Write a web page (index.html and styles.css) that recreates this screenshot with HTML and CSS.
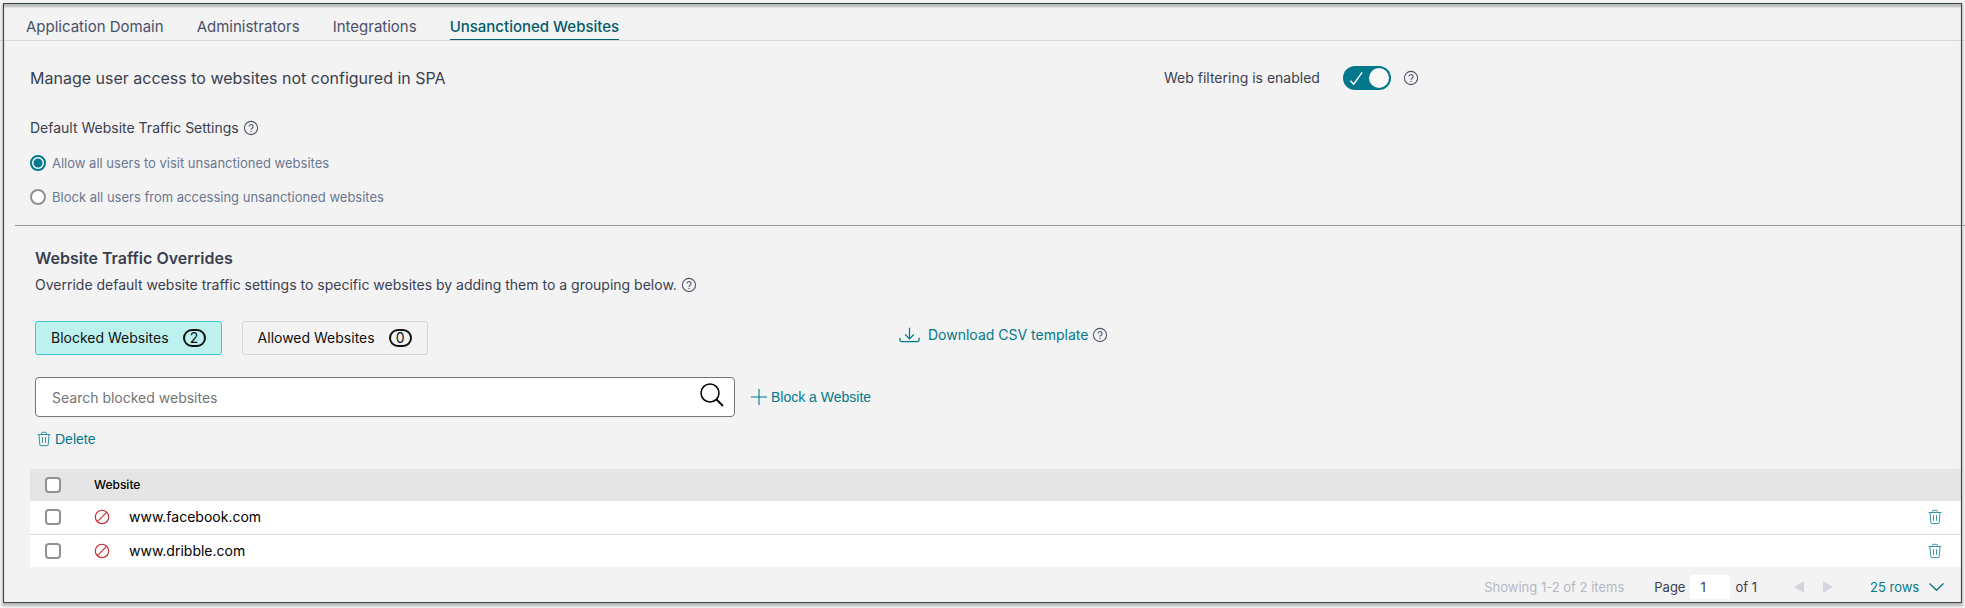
FILE: index.html
```html
<!DOCTYPE html>
<html lang="en">
<head>
  <meta charset="UTF-8" />
  <title>Unsanctioned Websites</title>
  <meta name="viewport" content="width=device-width, initial-scale=1" />
  <link rel="stylesheet" href="styles.css">
</head>
<body>
  <!-- shared icons -->
  <svg class="sprite" aria-hidden="true">
    <symbol id="help" viewBox="0 0 16 16">
      <circle cx="8" cy="8" r="6.6" fill="none" stroke="currentColor" stroke-width="1.1"/>
      <path d="M6 6.6a2 2 0 1 1 3.1 1.6C8.300 8.700 8 9 8 9.800" fill="none" stroke="currentColor" stroke-width="1.100"/>
      <circle cx="8" cy="11.500" r=".7" fill="currentColor"/>
    </symbol>
    <symbol id="trash" viewBox="0 0 14 16">
      <path d="M.7 3.500h12.600M4.600 3.300V2.200q0-.9.900-.9h3q.9 0 .9.900v1.100M2 3.600l.8 10.200q.1.800.9.800h6.600q.8 0 .9-.8L12 3.600M5.500 6.200v5.600M8.500 6.200v5.600" fill="none" stroke="currentColor" stroke-width=".8"/>
    </symbol>
    <symbol id="blocked" viewBox="0 0 16 16">
      <circle cx="8" cy="8" r="6.700" fill="none" stroke="currentColor" stroke-width="1.100"/>
      <path d="M12.700 3.300 3.300 12.700" stroke="currentColor" stroke-width="1.100"/>
    </symbol>
  </svg>

  <nav class="tabs">
    <a href="#domain">Application Domain</a>
    <a href="#administrators">Administrators</a>
    <a href="#integrations">Integrations</a>
    <a href="#unsanctioned" class="active" aria-current="page">Unsanctioned Websites</a>
  </nav>

  <main>
    <section class="settings">
      <div class="columns">
        <h1>Manage user access to websites not configured in SPA</h1>
        <div class="filtering">
          <label for="filtering">Web filtering is enabled</label>
          <span class="switch">
            <input type="checkbox" role="switch" id="filtering" checked>
            <svg viewBox="0 0 16 16" aria-hidden="true"><path d="M1.500 10.500 5 14 14 1.500" fill="none" stroke="#fff" stroke-width="1.500"/></svg>
          </span>
          <svg class="help"><use href="#help"/></svg>
        </div>
      </div>
      <fieldset>
        <legend>Default Website Traffic Settings <svg class="help"><use href="#help"/></svg></legend>
        <label class="option"><input type="radio" name="traffic" checked>Allow all users to visit unsanctioned websites</label>
        <label class="option"><input type="radio" name="traffic">Block all users from accessing unsanctioned websites</label>
      </fieldset>
    </section>

    <section class="overrides">
      <h2>Website Traffic Overrides</h2>
      <p>Override default website traffic settings to specific websites by adding them to a grouping below. <svg class="help"><use href="#help"/></svg></p>
      <div class="groups">
        <div class="group-buttons">
          <button class="group selected">Blocked Websites <span class="count">2</span></button>
          <button class="group">Allowed Websites <span class="count">0</span></button>
        </div>
        <div class="download">
          <a href="#template">
            <svg class="download-icon" viewBox="0 0 22 16"><path d="M11 .5v11M6.500 7.500 11 12l4.500-4.500M1 11v2q0 2 2 2h16q2 0 2-2v-2" fill="none" stroke="currentColor" stroke-width="1.300"/></svg>
            Download CSV template
          </a>
          <svg class="help"><use href="#help"/></svg>
        </div>
      </div>
      <div class="search-row">
        <div class="search">
          <input type="search" placeholder="Search blocked websites" aria-label="Search blocked websites">
          <svg viewBox="0 0 24 24" aria-hidden="true"><circle cx="10" cy="10" r="9" fill="none" stroke="#000" stroke-width="1.500"/><path d="m16.500 16.500 6.500 6.500" stroke="#000" stroke-width="1.800"/></svg>
        </div>
        <button class="action add"><svg viewBox="0 0 16 16"><path d="M8 0v16M0 8h16" stroke="currentColor" stroke-width="1.100"/></svg>Block a Website</button>
      </div>
      <button class="action delete"><svg class="trash"><use href="#trash"/></svg>Delete</button>
    </section>

    <table>
      <thead>
        <tr>
          <th class="check"><input type="checkbox" aria-label="Select all"></th>
          <th>Website</th>
          <th class="remove"></th>
        </tr>
      </thead>
      <tbody>
        <tr>
          <td class="check"><input type="checkbox" aria-label="Select www.facebook.com"></td>
          <td><div class="site"><svg class="blocked"><use href="#blocked"/></svg>www.facebook.com</div></td>
          <td class="remove"><button aria-label="Delete www.facebook.com"><svg class="trash"><use href="#trash"/></svg></button></td>
        </tr>
        <tr>
          <td class="check"><input type="checkbox" aria-label="Select www.dribble.com"></td>
          <td><div class="site"><svg class="blocked"><use href="#blocked"/></svg>www.dribble.com</div></td>
          <td class="remove"><button aria-label="Delete www.dribble.com"><svg class="trash"><use href="#trash"/></svg></button></td>
        </tr>
      </tbody>
    </table>

    <footer class="pager">
      <span class="showing">Showing 1-2 of 2 items</span>
      <label class="page">Page <input type="text" value="1"> of 1</label>
      <div class="arrows">
        <button aria-label="Previous page" disabled><svg viewBox="0 0 10 12"><path d="M10 0v12L0 6z" fill="currentColor"/></svg></button>
        <button aria-label="Next page" disabled><svg viewBox="0 0 10 12"><path d="M0 0v12l10-6z" fill="currentColor"/></svg></button>
      </div>
      <div class="rows">
        <select aria-label="Rows per page"><option>25 rows</option><option>50 rows</option></select>
        <svg viewBox="0 0 15 8" aria-hidden="true"><path d="m.5.5 7 6.800 7-6.800" fill="none" stroke="currentColor" stroke-width="1.300"/></svg>
      </div>
    </footer>
  </main>
</body>
</html>
```

FILE: styles.css
```css
:root{
  --teal:#02788c;
  --text:#3a3f50;
  --ui:Inter,"Liberation Sans",sans-serif;
}
*{box-sizing:border-box;}
body{
  margin:0;min-height:100vh;background:#f3f3f3;color:var(--text);
  font:14px/20px var(--ui);
}
/* window outline, drawn over the content */
body::after{
  content:"";position:fixed;inset:3px 3px 5px 3px;pointer-events:none;
  border:1px solid #36474f;
  box-shadow:0 2px 2px 1px #bbb,inset 0 3px 2px #bbb;
}
.sprite{display:none;}
svg{flex:none;}
h1,h2,p,fieldset,legend{margin:0;padding:0;border:0;font-weight:400;}
button{font:inherit;background:none;border:0;padding:0;cursor:pointer;}
.help{width:16px;height:16px;color:#50566a;}

.tabs{display:flex;gap:33px;height:41px;padding:16px 26px 0;border-bottom:1px solid #d9d9d9;}
.tabs a{height:24px;color:#4a5068;font-size:15px;line-height:22px;text-decoration:none;}
.tabs .active{color:#045c6c;font-weight:500;border-bottom:1px solid #045c6c;}

.settings{margin-left:15px;padding:24px 15px 11px;border-bottom:1px solid #999;}
.columns{display:grid;grid-template-columns:1134px 1fr;align-items:center;height:26px;}
h1{font-size:16px;}
.filtering{display:flex;align-items:center;}
.switch{position:relative;width:48px;height:24px;margin:0 12px 0 23px;}
.switch input{appearance:none;display:block;width:48px;height:24px;margin:0;border-radius:12px;background:var(--teal);}
.switch input::after{content:"";position:absolute;top:2px;right:2px;width:20px;height:20px;border-radius:50%;background:#f8f8f8;}
.switch svg{position:absolute;left:6px;top:5px;width:15px;height:15px;}
fieldset{margin-top:27px;}
legend{display:flex;align-items:center;gap:4px;margin-bottom:8px;}
.option{display:flex;align-items:center;gap:6px;height:34px;color:#6b7791;font-size:13px;}
.option input,.check input{appearance:none;width:16px;height:16px;margin:0;border:2px solid #919191;background:#fff;}
.option input{border-radius:50%;}
.option input:checked{border-color:var(--teal);background:radial-gradient(circle,var(--teal) 4px,#fff 5px);}

.overrides{padding:20px 35px 0;}
h2{font-size:16px;line-height:24px;font-weight:600;}
p{display:flex;align-items:center;gap:4px;height:30px;}
.groups{display:grid;grid-template-columns:864px 1fr;align-items:start;margin-top:21px;}
.group-buttons{display:flex;gap:20px;}
.group{display:flex;align-items:center;gap:14px;height:34px;padding:0 15px;border:1px solid #d5d5d5;border-radius:3px;color:#111;}
.selected{background:#bdf1ee;border-color:#3fc7cf;}
.count{width:23px;height:18px;border:2px solid #111;border-radius:9px;line-height:14px;text-align:center;}
.download{display:flex;align-items:center;gap:4px;padding-top:4px;color:var(--teal);}
.download a{display:flex;align-items:center;gap:8px;color:inherit;text-decoration:none;}
.download-icon{width:21px;height:16px;}
.search-row{display:flex;align-items:center;gap:16px;margin:22px 0 11px;}
.search{position:relative;width:700px;}
.search input{display:block;width:100%;height:40px;padding:0 50px 0 16px;border:1px solid #757575;border-radius:4px;background:#fff;font:inherit;}
.search input::placeholder{color:#757575;}
.search svg{position:absolute;right:11px;top:6px;width:24px;height:24px;}
.action{display:flex;align-items:center;gap:4px;height:22px;color:var(--teal);font-family:"Liberation Sans",Arial,sans-serif;}
.add svg{width:16px;height:16px;}
.delete{padding-left:2px;}
.trash{width:14px;height:16px;color:var(--teal);}

table{width:calc(100% - 33px);margin:19px 3px 0 30px;border-collapse:collapse;background:#fff;color:#000;}
th,td{height:33px;padding:0;text-align:left;}
th{height:32px;background:#e5e5e5;font-size:12px;font-weight:500;}
tbody tr + tr{border-top:1px solid #ddd;}
.check{width:64px;padding-left:15px;}
.check input{display:block;border-radius:4px;}
.site{display:flex;align-items:center;gap:19px;}
.blocked{width:16px;height:16px;color:#c4282d;}
.remove{width:34px;}
.remove button{display:block;}
.remove svg{display:block;}

.pager{display:flex;justify-content:flex-end;align-items:center;height:39px;padding:0 21px 0 0;font-size:13px;}
.showing{color:#b3b8c6;}
.page{display:flex;align-items:center;gap:5px;margin:0 37px 0 30px;}
.page input{width:40px;height:24px;padding:0 10px;border:0;border-radius:2px;background:#fff;color:var(--text);font:inherit;}
.arrows{display:flex;gap:19px;margin-right:37px;color:#d5d6db;}
.arrows button{color:inherit;}
.arrows svg{display:block;width:10px;height:12px;}
.rows{display:flex;align-items:center;gap:9px;color:var(--teal);}
.rows select{appearance:none;border:0;padding:0;background:none;color:inherit;font:inherit;}
.rows svg{width:15px;height:8px;}
```
